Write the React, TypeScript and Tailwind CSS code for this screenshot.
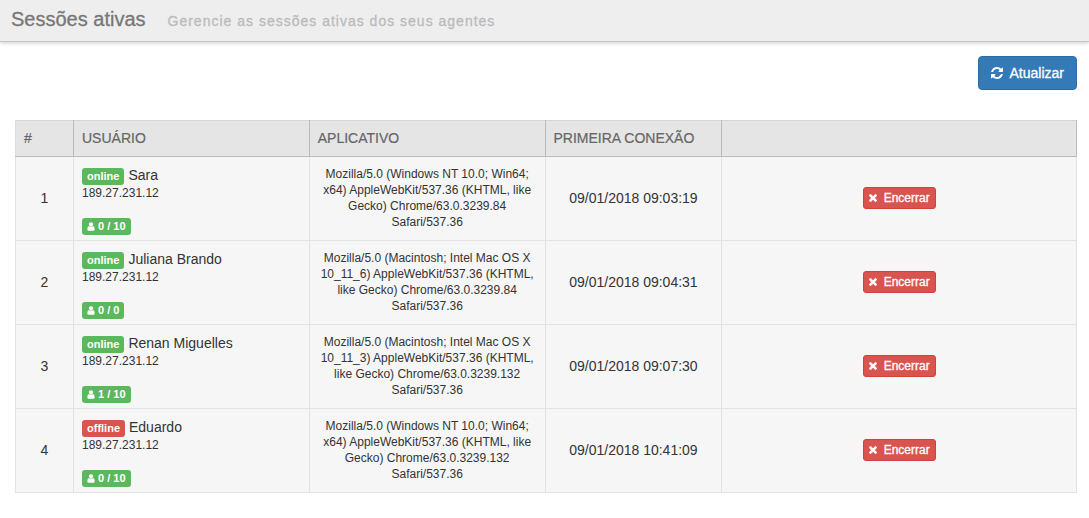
import clsx from "clsx";
import type { ReactNode } from "react";

type Session = {
  id: number;
  status: "online" | "offline";
  name: string;
  ip: string;
  chats: string;
  agent: string;
  connectedAt: string;
};

const sessions: Session[] = [
  {
    id: 1,
    status: "online",
    name: "Sara",
    ip: "189.27.231.12",
    chats: "0 / 10",
    agent:
      "Mozilla/5.0 (Windows NT 10.0; Win64; x64) AppleWebKit/537.36 (KHTML, like Gecko) Chrome/63.0.3239.84 Safari/537.36",
    connectedAt: "09/01/2018 09:03:19",
  },
  {
    id: 2,
    status: "online",
    name: "Juliana Brando",
    ip: "189.27.231.12",
    chats: "0 / 0",
    agent:
      "Mozilla/5.0 (Macintosh; Intel Mac OS X 10_11_6) AppleWebKit/537.36 (KHTML, like Gecko) Chrome/63.0.3239.84 Safari/537.36",
    connectedAt: "09/01/2018 09:04:31",
  },
  {
    id: 3,
    status: "online",
    name: "Renan Miguelles",
    ip: "189.27.231.12",
    chats: "1 / 10",
    agent:
      "Mozilla/5.0 (Macintosh; Intel Mac OS X 10_11_3) AppleWebKit/537.36 (KHTML, like Gecko) Chrome/63.0.3239.132 Safari/537.36",
    connectedAt: "09/01/2018 09:07:30",
  },
  {
    id: 4,
    status: "offline",
    name: "Eduardo",
    ip: "189.27.231.12",
    chats: "0 / 10",
    agent:
      "Mozilla/5.0 (Windows NT 10.0; Win64; x64) AppleWebKit/537.36 (KHTML, like Gecko) Chrome/63.0.3239.132 Safari/537.36",
    connectedAt: "09/01/2018 10:41:09",
  },
];

// viewBoxes are cropped to the glyph width
const icons = {
  refresh: {
    box: "128 128 1536 1536",
    d: "M1639 1056q0 5-1 7-64 268-268 434.5t-478 166.5q-146 0-282.5-55t-243.5-157l-129 129q-19 19-45 19t-45-19-19-45v-448q0-26 19-45t45-19h448q26 0 45 19t19 45-19 45l-137 137q71 66 161 102t187 36q134 0 250-65t186-179q11-17 53-117 8-23 30-23h192q13 0 22.5 9.5t9.5 22.5zm25-800v448q0 26-19 45t-45 19h-448q-26 0-45-19t-19-45 19-45l138-138q-148-137-349-137-134 0-250 65t-186 179q-11 17-53 117-8 23-30 23h-199q-13 0-22.5-9.5t-9.5-22.5v-7q65-268 270-434.5t480-166.5q146 0 284 55.5t245 156.5l130-129q19-19 45-19t45 19 19 45z",
  },
  times: {
    box: "302 366 1188 1188",
    d: "M1490 1322q0 40-28 68l-136 136q-28 28-68 28t-68-28l-294-294-294 294q-28 28-68 28t-68-28l-136-136q-28-28-28-68t28-68l294-294-294-294q-28-28-28-68t28-68l136-136q28-28 68-28t68 28l294 294 294-294q28-28 68-28t68 28l136 136q28 28 28 68t-28 68l-294 294 294 294q28 28 28 68z",
  },
  user: {
    box: "192 128 1408 1536",
    d: "M1536 1399q0 109-62.5 187t-150.5 78h-854q-88 0-150.5-78t-62.5-187q0-85 8.5-160.5t31.5-152 58.5-131 94-89 134.5-34.5q131 128 313 128t313-128q76 0 134.5 34.5t94 89 58.5 131 31.5 152 8.5 160.5zm-256-887q0 159-112.5 271.5t-271.5 112.5-271.5-112.5-112.5-271.5 112.5-271.5 271.5-112.5 271.5 112.5 112.5 271.5z",
  },
};

function Icon({ name, className }: { name: keyof typeof icons; className: string }) {
  return (
    <svg viewBox={icons[name].box} fill="currentColor" aria-hidden="true" className={className}>
      <path d={icons[name].d} />
    </svg>
  );
}

function Label({ danger, children }: { danger?: boolean; children: ReactNode }) {
  return (
    <span
      className={clsx(
        "inline-flex h-[17px] items-center rounded-[3px] px-[5px] text-[11px] font-bold text-white",
        danger ? "bg-[#d9534f]" : "bg-[#5cb85c]"
      )}
    >
      {children}
    </span>
  );
}

function HeadCell({ children }: { children?: ReactNode }) {
  return (
    <th
      scope="col"
      className="h-9 border border-[#bbb] border-t-[#d5d5d5] px-2 pb-0.5 text-left font-normal text-[#666] [-webkit-text-stroke:0.2px] first:border-l-[#ddd]"
    >
      {children}
    </th>
  );
}

function Cell({ className, children }: { className?: string; children: ReactNode }) {
  return <td className={clsx("border border-[#e2e2e2] px-2", className)}>{children}</td>;
}

export default function App() {
  return (
    <div className="bg-white font-['Liberation_Sans',Arial,sans-serif] text-sm text-[#333]">
      <header className="flex h-[42px] items-baseline gap-[22px] border-b border-[#c6c6c6] bg-[#eee] px-[11px] pt-[5px] shadow-[0_1px_4px_rgba(0,0,0,0.2)]">
        <h1 className="text-xl text-[#777] [-webkit-text-stroke:0.3px]">Sessões ativas</h1>
        <p className="text-sm tracking-[1px] text-[#bbb] [-webkit-text-stroke:0.3px]">
          Gerencie as sessões ativas dos seus agentes
        </p>
      </header>

      <main className="pt-3.5 pr-3 pb-6 pl-[15px]">
        <div className="mb-[30px] flex justify-end">
          <button
            type="button"
            className="flex h-[34px] items-center gap-[7px] rounded border border-[#2e6da4] bg-[#337ab7] px-3 text-white [-webkit-text-stroke:0.3px]"
          >
            <Icon name="refresh" className="size-3" />
            Atualizar
          </button>
        </div>

        <table className="w-full table-fixed border-collapse">
          <colgroup>
            <col className="w-[58px]" />
            <col className="w-4/18" />
            <col className="w-4/18" />
            <col className="w-3/18" />
            <col />
          </colgroup>
          <thead className="bg-[#e5e5e5]">
            <tr>
              <HeadCell>#</HeadCell>
              <HeadCell>USUÁRIO</HeadCell>
              <HeadCell>APLICATIVO</HeadCell>
              <HeadCell>PRIMEIRA CONEXÃO</HeadCell>
              <HeadCell />
            </tr>
          </thead>
          <tbody className="bg-[#f6f6f6]">
            {sessions.map((s) => (
              <tr key={s.id} className="h-21 text-center">
                <Cell className="pb-0.5">{s.id}</Cell>
                <Cell className="pt-1.5 text-left">
                  <div className="flex items-start gap-1">
                    <Label danger={s.status === "offline"}>{s.status}</Label>
                    <span className="leading-[14px]">{s.name}</span>
                  </div>
                  <div className="mb-[17px] text-xs">{s.ip}</div>
                  <div className="flex">
                    <Label>
                      <Icon name="user" className="mr-[3px] h-[9px] w-2" />
                      {s.chats}
                    </Label>
                  </div>
                </Cell>
                <Cell className="pb-0.5 text-xs">{s.agent}</Cell>
                <Cell className="pb-0.5">{s.connectedAt}</Cell>
                <Cell className="pb-0.5">
                  <button
                    type="button"
                    className="inline-flex h-[22px] items-center gap-[7px] rounded-[3px] border border-[#d43f3a] bg-[#d9534f] px-[5px] align-middle text-xs text-white [-webkit-text-stroke:0.3px]"
                  >
                    <Icon name="times" className="size-2" />
                    Encerrar
                  </button>
                </Cell>
              </tr>
            ))}
          </tbody>
        </table>
      </main>
    </div>
  );
}
